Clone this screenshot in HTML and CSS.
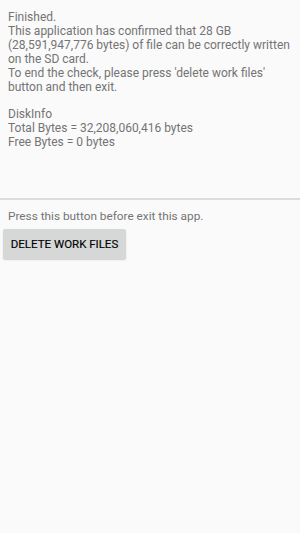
FILE: index.html
```html
<!DOCTYPE html>
<html>
<head>
<meta charset="utf-8">
<link rel="stylesheet" href="styles.css">
</head>
<body>
<div class="screen">
  <div class="log">
    <p class="line">Finished.</p>
    <p class="line">This application has confirmed that 28 GB (28,591,947,776 bytes) of file can be correctly written on the SD card.</p>
    <p class="line">To end the check, please press 'delete work files' button and then exit.</p>
    <p class="line blank">&nbsp;</p>
    <p class="line">DiskInfo</p>
    <p class="line">Total Bytes = 32,208,060,416 bytes</p>
    <p class="line">Free Bytes = 0 bytes</p>
  </div>
  <div class="divider"></div>
  <div class="bottom">
    <p class="hint">Press this button before exit this app.</p>
    <button class="btn">DELETE WORK FILES</button>
  </div>
</div>
</body>
</html>
```
FILE: styles.css
```css
html, body {
  margin: 0;
  padding: 0;
  background: #fafafa;
}
body {
  width: 300px;
  height: 533px;
  overflow: hidden;
  font-family: Roboto, "Noto Sans", sans-serif;
}
.screen {
  display: flex;
  flex-direction: column;
}
.log {
  height: 188px;
  padding: 11px 8px 0 8px;
  box-sizing: border-box;
  color: #747474;
  font-size: 12px;
  line-height: 13.9px;
}
.line {
  margin: 0;
}
.divider {
  margin-top: 10px;
  height: 1.5px;
  background: #dcdcdc;
}
.bottom {
  padding: 9px 0 0 0;
  display: flex;
  flex-direction: column;
  align-items: flex-start;
}
.hint {
  margin: 0 0 0 8px;
  color: #747474;
  font-size: 11.8px;
  line-height: 14px;
}
.btn {
  margin: 6px 0 0 3px;
  width: 123px;
  height: 30px;
  border: none;
  border-radius: 2px;
  background: #d6d7d7;
  color: #000;
  font-family: Roboto, "Noto Sans", sans-serif;
  font-size: 11.5px;
  font-weight: 400;
  padding: 0;
  -webkit-text-stroke: 0.15px #000;
  box-shadow: 0 1px 1.5px rgba(0,0,0,0.18);
}
```
